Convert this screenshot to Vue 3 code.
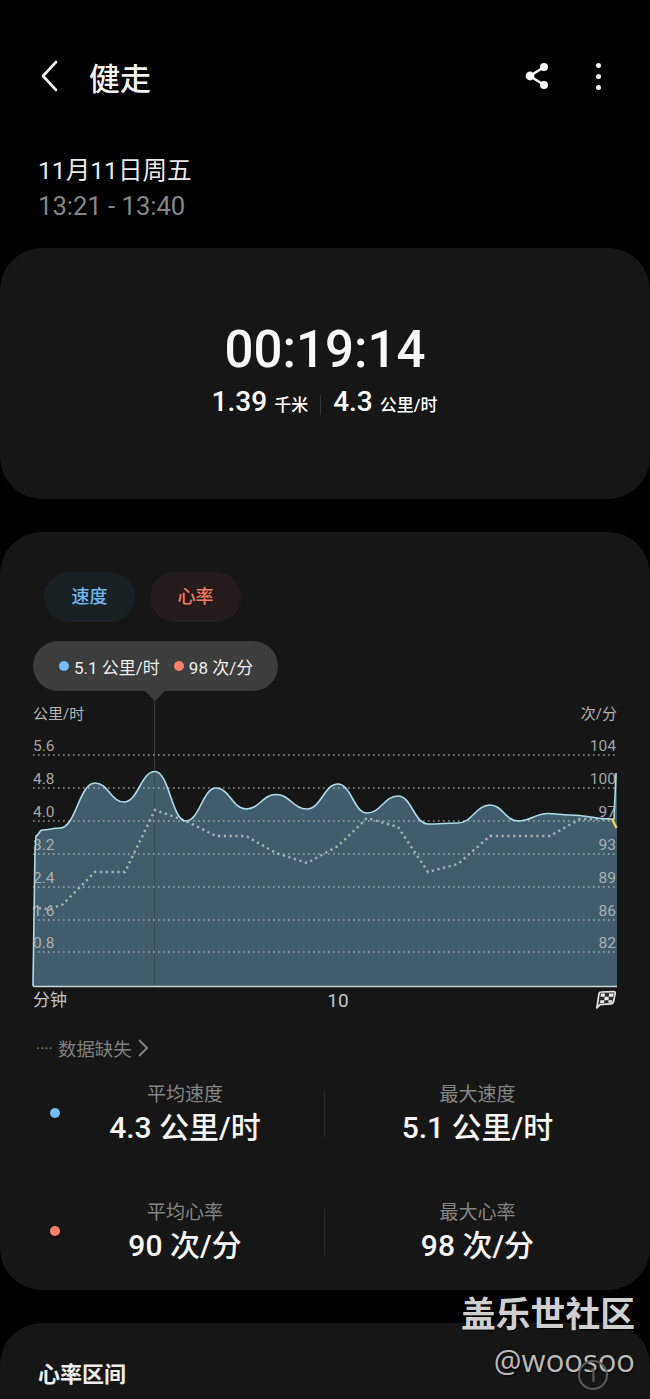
<script setup>
const speed = [
  [36, 836], [42, 830], [60, 828], [95, 783], [124, 802], [155, 771.5], [186, 821], [216, 788],
  [246, 809], [276, 794.5], [307, 809], [338, 784], [367, 813], [398, 796], [428, 824], [458, 823],
  [490, 805], [518, 821], [548, 813.5], [570, 815], [611, 819]
]
const heart = [
  [36, 908], [48, 909], [62, 905], [95, 872], [125, 872], [155, 810], [186, 821], [216, 836], [246, 836],
  [276, 853], [307, 863], [338, 846], [367, 818], [398, 827], [428, 872], [458, 864], [490, 836],
  [550, 836], [580, 819], [611, 819]
]

function smooth(pts) {
  let d = ''
  for (let i = 1; i < pts.length; i++) {
    const [x0, y0] = pts[i - 1]
    const [x1, y1] = pts[i]
    const dx = (x1 - x0) * 0.45
    d += ` C${x0 + dx},${y0} ${x1 - dx},${y1} ${x1},${y1}`
  }
  return d
}

const speedLine = `M33,986 L35,850 L36,836${smooth(speed)} L614,819 L616,773`
const speedArea = `${speedLine} L617,773 L617,986 Z`
// heart rate is drawn with straight segments, only the speed curve is smoothed
const heartLine = 'M33,908 ' + heart.map(([x, y]) => `L${x},${y}`).join(' ')

const grid = [755, 788, 821, 854, 887, 920, 952]
const leftAxis = ['5.6', '4.8', '4.0', '3.2', '2.4', '1.6', '0.8']
const rightAxis = ['104', '100', '97', '93', '89', '86', '82']
</script>

<template>
  <div class="screen">
    <header class="top">
      <svg class="back" width="20" height="32" viewBox="0 0 20 32">
        <path d="M17 2 L4 16 L17 30" fill="none" stroke="#f2f2f2" stroke-width="2.6" stroke-linecap="round" stroke-linejoin="round" />
      </svg>
      <h1>健走</h1>
      <svg class="share" width="26" height="28" viewBox="0 0 26 28">
        <path d="M20 5 L6 14 L20 23" fill="none" stroke="#f5f5f5" stroke-width="2.6" />
        <circle cx="20" cy="5" r="4" fill="#f5f5f5" />
        <circle cx="6" cy="14" r="4.4" fill="#f5f5f5" />
        <circle cx="20" cy="23" r="4" fill="#f5f5f5" />
      </svg>
      <div class="more"><i></i><i></i><i></i></div>
    </header>

    <div class="when">
      <div class="date">11月11日周五</div>
      <div class="time">13:21 - 13:40</div>
    </div>

    <section class="card summary">
      <div class="duration">00:19:14</div>
      <div class="totals">
        <span class="num">1.39</span><span class="unit">千米</span>
        <span class="sep"></span>
        <span class="num">4.3</span><span class="unit">公里/时</span>
      </div>
    </section>

    <section class="card detail">
      <div class="pills">
        <div class="pill blue">速度</div>
        <div class="pill red">心率</div>
      </div>
      <div class="tip">
        <i class="dot bg-blue"></i><span>5.1 公里/时</span>
        <i class="dot bg-red second"></i><span>98 次/分</span>
      </div>

      <svg class="chart" width="650" height="324" viewBox="0 691 650 324">
        <path d="M145,691 L165,691 L157,699 L155,701 L153,699 Z" fill="#3d3d3d" />
        <path :d="speedArea" fill="#415d6b" />
        <line x1="154.5" y1="700" x2="154.5" y2="986" stroke="#3a3a3a" stroke-width="1" />
        <path :d="speedArea" fill="#415d6b" opacity="0.55" />
        <line v-for="y in grid" :key="y" x1="33" :y1="y" x2="617" :y2="y" stroke="#cfcfcf" stroke-width="1.2" stroke-dasharray="1.6 3.4" />
        <path :d="heartLine" fill="none" stroke="#a9b3b7" stroke-width="2.4" stroke-dasharray="2.2 3.6" />
        <path :d="speedLine" fill="none" stroke="#aedbea" stroke-width="1.6" />
        <line x1="612" y1="819" x2="616.5" y2="828" stroke="#f2d23c" stroke-width="2.4" />
        <line x1="33" y1="986.5" x2="617" y2="986.5" stroke="#c9d2d6" stroke-width="1.6" />

        <text x="33" y="719" class="axis-title">公里/时</text>
        <text x="617" y="719" class="axis-title" text-anchor="end">次/分</text>
        <text v-for="(v, i) in leftAxis" :key="v" x="33" :y="grid[i] - 4" class="axis">{{ v }}</text>
        <text v-for="(v, i) in rightAxis" :key="v" x="616" :y="grid[i] - 4" class="axis" text-anchor="end">{{ v }}</text>

        <text x="33" y="1006" class="minute">分钟</text>
        <text x="338" y="1007" class="minute ten" text-anchor="middle">10</text>

        <!-- finish flag -->
        <g transform="translate(596 990)">
          <path d="M0.8 18 L3 3.6 Q3.3 2 5 2 L17.8 1.6 Q19.6 1.6 19.2 3.4 L17.4 12 Q17 13.8 15.2 13.8 L4 14.6 Z" fill="#2e2e2e" stroke="#e2e2e2" stroke-width="1.7" stroke-linejoin="round" />
          <path d="M5 3.4 h4 l-.3 3.4 h-4.2 Z M13 3.4 h4.6 l-.6 3.4 h-4.2 Z M8.7 6.8 h4.1 l-.3 3.4 h-4.2 Z M4.4 10.2 h3.9 l-.2 2.8 h-4.1 Z M12.5 10.2 h4 l-.5 2.6 h-3.7 Z" fill="#e8e8e8" />
        </g>
      </svg>

      <div class="missing">
        <span class="dots">····</span>
        <span>数据缺失</span>
        <svg width="12" height="20" viewBox="0 0 12 20">
          <path d="M2 2 L10 10 L2 18" fill="none" stroke="#808080" stroke-width="2" />
        </svg>
      </div>

      <div class="stats">
        <div class="stat first">
          <i class="dot bg-blue"></i>
          <div class="stat-text"><div class="label">平均速度</div><div class="value">4.3 公里/时</div></div>
        </div>
        <div class="stat">
          <div class="stat-text"><div class="label">最大速度</div><div class="value">5.1 公里/时</div></div>
        </div>
      </div>
      <div class="stats second-row">
        <div class="stat first">
          <i class="dot bg-red"></i>
          <div class="stat-text"><div class="label">平均心率</div><div class="value">90 次/分</div></div>
        </div>
        <div class="stat">
          <div class="stat-text"><div class="label">最大心率</div><div class="value">98 次/分</div></div>
        </div>
      </div>
    </section>

    <section class="card zones">
      <h2>心率区间</h2>
    </section>

    <div class="mark">
      <div class="mark-cn">盖乐世社区</div>
      <div class="mark-en">@woosoo</div>
      <svg class="info" width="32" height="32" viewBox="0 0 32 32">
        <circle cx="16" cy="16" r="14" fill="none" stroke="#5e5e5e" stroke-width="2" />
        <path d="M13 12 L16.5 10 V23" fill="none" stroke="#5e5e5e" stroke-width="2" />
      </svg>
    </div>
  </div>
</template>

<style scoped>
.screen {
  position: relative;
  width: 650px;
  height: 1399px;
  overflow: hidden;
  background: #000;
  color: #fff;
  font-family: Roboto, "Noto Sans CJK SC", sans-serif;
}
.top {
  display: flex;
  align-items: center;
  height: 50px;
  margin-top: 51px;
  padding-left: 39px;
}
.back {
  flex: none;
}
h1 {
  margin: 0 0 0 30px;
  font-size: 31px;
  font-weight: 500;
  color: #f5f5f5;
}
.share {
  margin-left: auto;
}
.more {
  display: flex;
  flex-direction: column;
  gap: 6px;
  margin: 0 49px 0 46px;
}
.more i {
  width: 5px;
  height: 5px;
  border-radius: 50%;
  background: #f5f5f5;
}
.when {
  margin-top: 52px;
  padding-left: 38px;
  line-height: 36px;
}
.date {
  font-size: 24.6px;
  color: #eaeaea;
}
.time {
  font-size: 25.6px;
  color: #858585;
  margin-top: -1px;
}
.card {
  background: #161616;
  border-radius: 42px;
}
.summary {
  height: 251px;
  margin-top: 24px;
  padding-top: 69px;
  box-sizing: border-box;
  text-align: center;
}
.duration {
  font-size: 51px;
  font-weight: 500;
  line-height: 66px;
  color: #f8f8f8;
}
.totals {
  display: flex;
  justify-content: center;
  align-items: baseline;
  margin-top: 2px;
  margin-left: -1px;
  height: 40px;
}
.num {
  font-size: 28px;
  font-weight: 500;
}
.unit {
  font-size: 17px;
  font-weight: 500;
  margin-left: 7px;
}
.sep {
  width: 1px;
  height: 20px;
  background: #333;
  margin: 0 12px;
  align-self: center;
}
.detail {
  position: relative;
  height: 758px;
  margin-top: 33px;
  padding-top: 40px;
  box-sizing: border-box;
}
.pills {
  display: flex;
  gap: 15px;
  padding-left: 44px;
}
.pill {
  width: 91px;
  height: 50px;
  border-radius: 25px;
  font-size: 18px;
  font-weight: 500;
  line-height: 50px;
  text-align: center;
}
.blue {
  background: #182024;
  color: #70b8f2;
}
.red {
  background: #251b1a;
  color: #ef7a65;
}
.tip {
  display: flex;
  align-items: center;
  width: 245px;
  height: 50px;
  margin: 19px 0 0 33px;
  padding-left: 26px;
  box-sizing: border-box;
  border-radius: 25px;
  background: #3d3d3d;
  font-size: 17px;
  color: #eee;
}
.tip .dot {
  margin-right: 5px;
}
.tip .second {
  margin-left: 14px;
}
.dot {
  flex: none;
  width: 10px;
  height: 10px;
  border-radius: 50%;
}
.bg-blue {
  background: #74bcf7;
}
.bg-red {
  background: #f9816c;
}
.chart {
  display: block;
}
.axis-title {
  font-size: 15px;
  fill: #b5b5b5;
}
.axis {
  font-size: 15.5px;
  fill: #b9b9b9;
  fill-opacity: 0.9;
}
.minute {
  font-size: 17px;
  fill: #c4c4c4;
}
.ten {
  font-size: 19px;
}
.missing {
  display: flex;
  align-items: center;
  height: 24px;
  margin-top: 21px;
  padding-left: 36px;
  font-size: 18.4px;
  color: #7f7f7f;
}
.missing .dots {
  width: 22px;
  font-size: 16px;
}
.missing svg {
  margin-left: 5px;
}
.stats {
  display: grid;
  grid-template-columns: 325px 325px;
  margin-top: 21px;
}
.second-row {
  margin-top: 51px;
}
.stat {
  display: flex;
  align-items: center;
  height: 67px;
}
.stat.first {
  padding-left: 50px;
  position: relative;
}
.stat.first::after {
  content: "";
  position: absolute;
  right: 0;
  top: 10px;
  width: 1px;
  height: 46px;
  background: #2b2b2b;
}
.stat.first .dot {
  margin-top: -4px;
}
.stat-text {
  flex: 1;
  text-align: center;
  padding-right: 20px;
}
.stat.first .stat-text {
  padding-right: 0;
  margin-left: -15px;
}
.label {
  font-size: 19px;
  line-height: 27px;
  color: #858585;
}
.value {
  font-size: 30px;
  font-weight: 500;
  line-height: 40px;
  color: #f6f6f6;
}
.zones {
  height: 120px;
  margin-top: 33px;
  padding: 37px 0 0 38px;
  box-sizing: border-box;
}
h2 {
  margin: 0;
  font-size: 22px;
  font-weight: 700;
  line-height: 30px;
  color: #eee;
}
.mark {
  position: absolute;
  right: 15px;
  top: 1293px;
  text-align: right;
  color: #cfcfcf;
  text-shadow: 1px 1px 2px #000;
}
.mark-cn {
  font-size: 34.8px;
  font-weight: 700;
  line-height: 44px;
}
.mark-en {
  margin-top: 3px;
  font-family: "Open Sans", sans-serif;
  font-size: 31px;
  line-height: 40px;
  color: #b9b9b9;
}
.info {
  position: absolute;
  right: 26px;
  top: 66px;
}
</style>
